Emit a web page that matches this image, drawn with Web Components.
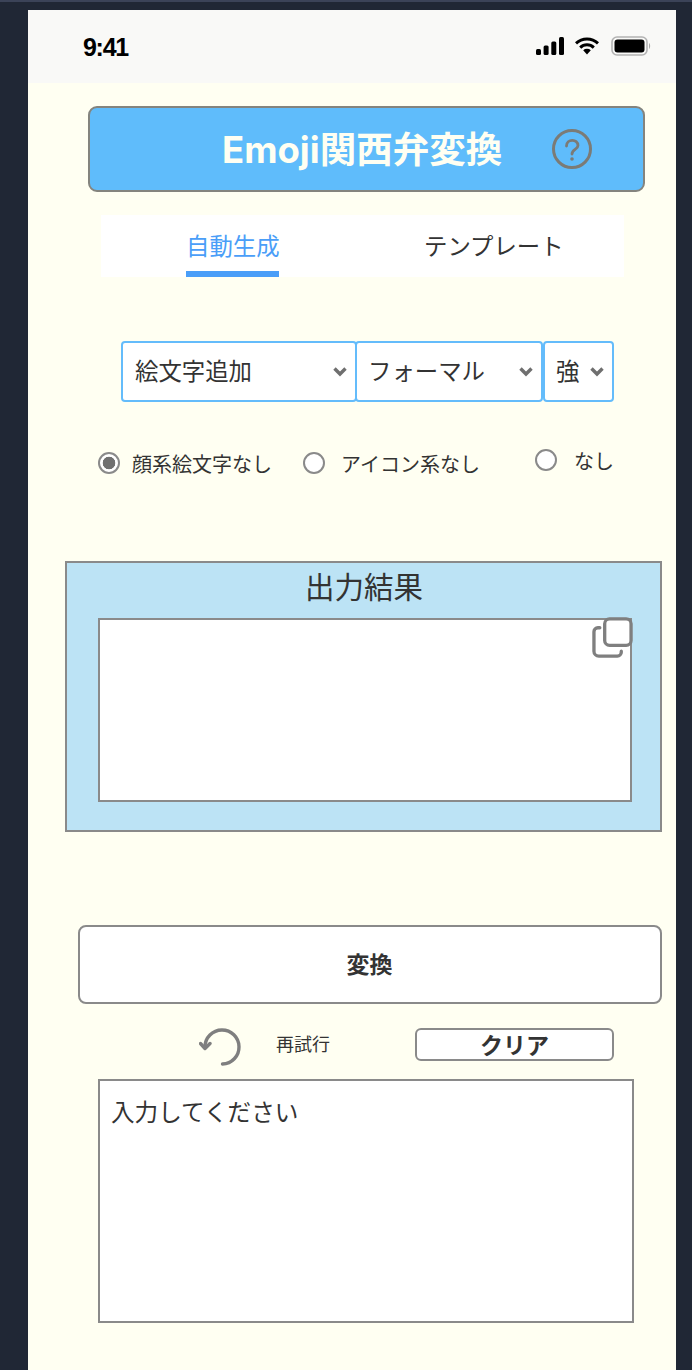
<!DOCTYPE html>
<html lang="ja">
<head>
<meta charset="utf-8">
<title>Emoji関西弁変換</title>
<style>
  html, body { margin: 0; height: 100%; }
  body {
    background: #202735;
    border-top: 2px solid #3b4358;
    box-sizing: border-box;
    font-family: "Noto Sans CJK JP", sans-serif;
    color: #333;
    overflow: hidden;
  }
</style>
</head>
<body>
<phone-frame>
  <status-bar></status-bar>
  <app-header title="Emoji関西弁変換"></app-header>
  <tab-bar></tab-bar>
  <select-row>
    <drop-select style="width:236px">絵文字追加</drop-select>
    <drop-select style="width:188px;margin-left:-2px;padding-left:11px">フォーマル</drop-select>
    <drop-select style="width:71px;padding-left:11px">強</drop-select>
  </select-row>
  <radio-row>
    <radio-option checked>顔系絵文字なし</radio-option>
    <radio-option style="margin-left:31px;gap:16px">アイコン系なし</radio-option>
    <radio-option style="margin-left:55px;margin-top:-3px;gap:17px">なし</radio-option>
  </radio-row>
  <output-panel title="出力結果"></output-panel>
  <convert-button>変換</convert-button>
  <action-row></action-row>
  <input-box>入力してください</input-box>
</phone-frame>

<script>
  // Common font stack for everything inside the shadow roots
  const FONT = '"Noto Sans CJK JP", sans-serif';

  function define(name, html, init) {
    customElements.define(name, class extends HTMLElement {
      constructor() {
        super();
        this.attachShadow({ mode: "open" });
      }
      connectedCallback() {
        const title = this.getAttribute("title") || "";
        this.shadowRoot.innerHTML = html.replace("${title}", title);
        if (init) init(this);
      }
    });
  }

  define("phone-frame", `
    <style>
      :host {
        display: flex;
        flex-direction: column;
        box-sizing: border-box;
        width: 648px;
        height: 1360px;
        margin: 8px 0 0 28px;
        background: #fffff2;
        overflow: hidden;
      }
    </style>
    <slot></slot>
  `);

  define("status-bar", `
    <style>
      :host {
        display: flex;
        align-items: center;
        justify-content: space-between;
        box-sizing: border-box;
        height: 73px;
        padding: 0 25px 0 55px;
        background: #f9f9f7;
        color: #000;
        font: 700 25px "Liberation Sans", sans-serif;
        letter-spacing: -1.3px;
      }
      .time { margin-top: 1px; }
      .icons { display: flex; align-items: center; gap: 11px; margin-top: -1px; }
      .battery { margin-left: 1px; }
      svg { display: block; }
    </style>
    <span class="time">9:41</span>
    <div class="icons">
      <svg width="28" height="18" viewBox="0 0 28 18">
        <rect x="0" y="12" width="5" height="6" rx="1.5" fill="#000"/>
        <rect x="7.6" y="8.5" width="5" height="9.5" rx="1.5" fill="#000"/>
        <rect x="15.3" y="4.5" width="5" height="13.5" rx="1.5" fill="#000"/>
        <rect x="23" y="0" width="5" height="18" rx="1.5" fill="#000"/>
      </svg>
      <svg width="24" height="18" viewBox="0 0 24 18">
        <path d="M1 6.4 A16 16 0 0 1 23 6.4" fill="none" stroke="#000" stroke-width="3"/>
        <path d="M5.2 10.6 A9.8 9.8 0 0 1 18.8 10.6" fill="none" stroke="#000" stroke-width="3"/>
        <path d="M8.2 13.2 A5.6 5.6 0 0 1 15.8 13.2 L12 17.6 Z" fill="#000"/>
      </svg>
      <svg class="battery" width="40" height="20" viewBox="0 0 40 20">
        <rect x="1" y="1" width="35" height="18" rx="5" fill="none" stroke="#b3b3b3" stroke-width="1.6"/>
        <rect x="3.5" y="3.5" width="30" height="13" rx="3" fill="#000"/>
        <path d="M38 7 C39.5 8 39.5 12 38 13 Z" fill="#a8a8a8"/>
      </svg>
    </div>
  `);

  define("app-header", `
    <style>
      :host {
        display: flex;
        align-items: center;
        box-sizing: border-box;
        width: 557px;
        height: 86px;
        margin: 23px 0 0 60px;
        padding-left: 132px;
        background: #5fbcfb;
        border: 2px solid #84847e;
        border-radius: 9px;
        color: #fffff2;
        font: 700 36.5px Inter, ${FONT};
      }
      .label { width: 281px; white-space: nowrap; margin-top: -3px; }
      svg { margin-left: 48px; display: block; }
    </style>
    <span class="label">\${title}</span>
    <svg width="42" height="42" viewBox="0 0 42 42">
      <circle cx="21" cy="21" r="18.5" fill="none" stroke="#7b7b76" stroke-width="3"/>
      <path d="M15.5 18 C15.5 10.5 27 10.5 27 17.5 C27 21.5 21 21.5 21 26" fill="none" stroke="#7b7b76" stroke-width="2.8" stroke-linecap="round"/>
      <circle cx="21" cy="31" r="1.8" fill="#7b7b76"/>
    </svg>
  `);

  define("tab-bar", `
    <style>
      :host {
        display: flex;
        box-sizing: border-box;
        width: 523px;
        height: 62px;
        margin: 23px 0 0 73px;
        background: #fff;
        font: 400 23.4px/1 ${FONT};
        color: #333;
      }
      .tab {
        box-sizing: border-box;
        height: 62px;
        padding-top: 19px;
        white-space: nowrap;
      }
      .active {
        width: 93px;
        margin-left: 85px;
        color: #4a9ef8;
        border-bottom: 6px solid #4a9ef8;
        text-align: center;
      }
      .other { margin-left: 145px; }
    </style>
    <div class="tab active">自動生成</div>
    <div class="tab other">テンプレート</div>
  `);

  define("select-row", `
    <style>
      :host { display: flex; margin: 64px 0 0 93px; }
    </style>
    <slot></slot>
  `);

  define("drop-select", `
    <style>
      :host {
        display: flex;
        align-items: center;
        justify-content: space-between;
        box-sizing: border-box;
        height: 61px;
        padding: 0 7px 4px 12px;
        background: #fff;
        border: 2px solid #64bcfb;
        border-radius: 4px;
        color: #333;
        font: 400 23.4px ${FONT};
        white-space: nowrap;
      }
      svg { display: block; flex: none; margin-top: 4px; }
    </style>
    <slot></slot>
    <svg width="16" height="11" viewBox="0 0 16 11">
      <path d="M2.5 2.5 L8 8 L13.5 2.5" fill="none" stroke="#6f6f6f" stroke-width="3.4"/>
    </svg>
  `);

  define("radio-row", `
    <style>
      :host { display: flex; align-items: flex-start; margin: 49px 0 0 70px; }
    </style>
    <slot></slot>
  `);

  define("radio-option", `
    <style>
      :host {
        display: flex;
        align-items: center;
        gap: 12px;
        height: 24px;
        color: #333;
        font: 400 20px ${FONT};
        white-space: nowrap;
      }
      .dot {
        box-sizing: border-box;
        width: 22px;
        height: 22px;
        border: 2px solid #8a8a8a;
        border-radius: 50%;
        background: #fff;
        flex: none;
      }
      :host([checked]) .dot {
        background: radial-gradient(circle, #707070 0 6px, #fff 6.6px);
      }
    </style>
    <span class="dot"></span>
    <slot></slot>
  `);

  define("output-panel", `
    <style>
      :host {
        display: block;
        box-sizing: border-box;
        width: 597px;
        height: 271px;
        margin: 86px 0 0 37px;
        padding: 0 28px 0 31px;
        background: #bce3f5;
        border: 2px solid #8a8a8a;
        color: #333;
        font: 400 29.5px/1 ${FONT};
      }
      .title { height: 55px; padding-top: 8px; box-sizing: border-box; text-align: center; margin-right: 2px; }
      .box {
        position: relative;
        box-sizing: border-box;
        height: 184px;
        background: #fff;
        border: 2px solid #8a8a8a;
      }
      svg { position: absolute; top: -3px; right: -3px; display: block; }
    </style>
    <div class="title">\${title}</div>
    <div class="box">
      <svg width="41" height="41" viewBox="0 0 42 42">
        <rect x="13" y="2" width="27" height="27" rx="5" fill="#fff" stroke="#7f7f7f" stroke-width="3.4"/>
        <path d="M8 11 H6 A4 4 0 0 0 2 15 V35 A5 5 0 0 0 7 40 H26 A4 4 0 0 0 30 36 V35" fill="none" stroke="#7f7f7f" stroke-width="3.4" stroke-linecap="round"/>
      </svg>
    </div>
  `);

  define("convert-button", `
    <style>
      :host {
        display: flex;
        align-items: center;
        justify-content: center;
        box-sizing: border-box;
        width: 584px;
        height: 79px;
        margin: 93px 0 0 50px;
        padding: 0 1px 4px 0;
        background: #fff;
        border: 2px solid #8a8a8a;
        border-radius: 8px;
        color: #333;
        font: 700 23px ${FONT};
      }
    </style>
    <slot></slot>
  `);

  define("action-row", `
    <style>
      :host {
        display: flex;
        align-items: center;
        height: 38px;
        margin: 24px 0 0 171px;
        color: #333;
      }
      svg { display: block; flex: none; }
      .retry { margin-left: 34px; margin-top: -8px; font: 400 18px ${FONT}; white-space: nowrap; }
      .clear {
        display: flex;
        align-items: center;
        justify-content: center;
        box-sizing: border-box;
        width: 199px;
        height: 33px;
        margin-left: 85px;
        margin-top: -5px;
        background: #fff;
        border: 2px solid #8a8a8a;
        border-radius: 6px;
        font: 700 23px/1 ${FONT};
      }
    </style>
    <svg width="43" height="38" viewBox="0 0 43 38">
      <path d="M6 19 A17 17 0 1 1 23.5 36" fill="none" stroke="#7f7f7f" stroke-width="3.4" stroke-linecap="round"/>
      <path d="M1.5 15.5 L6 20.5 L11 15.5" fill="none" stroke="#7f7f7f" stroke-width="3.4" stroke-linejoin="round" stroke-linecap="round"/>
    </svg>
    <span class="retry">再試行</span>
    <span class="clear">クリア</span>
  `);

  define("input-box", `
    <style>
      :host {
        display: block;
        box-sizing: border-box;
        width: 536px;
        height: 244px;
        margin: 13px 0 0 70px;
        padding: 16px 11px;
        background: #fff;
        border: 2px solid #8a8a8a;
        color: #333;
        font: 400 23.6px/1.2 ${FONT};
      }
    </style>
    <slot></slot>
  `);
</script>
</body>
</html>
